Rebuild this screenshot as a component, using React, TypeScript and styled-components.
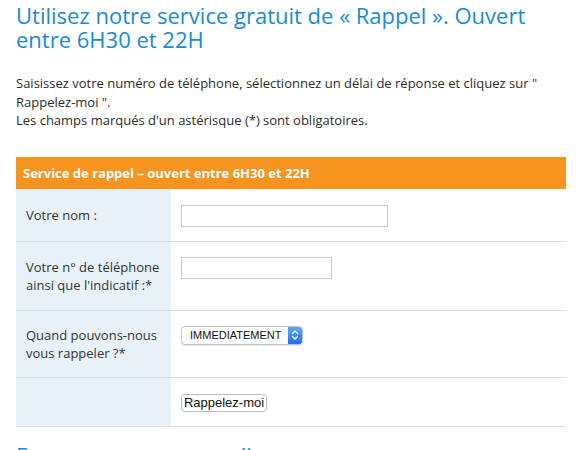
import React from "react";
import styled, { createGlobalStyle } from "styled-components";

const Global = createGlobalStyle`
  html, body { margin: 0; padding: 0; background: #ffffff; }
  body { font-family: "Open Sans", "Liberation Sans", sans-serif; color: #333333; }
`;

const Page = styled.div`
  width: 550px;
  padding: 3px 17px 0 16px;
`;

const Title = styled.h1`
  margin: 0;
  font-family: "Open Sans", sans-serif;
  font-weight: 400;
  font-size: 22px;
  line-height: 24px;
  color: #1a8ad5;
`;

const Intro = styled.p`
  margin: 23px 0 0;
  font-size: 13px;
  line-height: 18.5px;
  color: #2b2b2b;
`;

const Panel = styled.section`
  margin-top: 27px;
  display: flex;
  flex-direction: column;
`;

const PanelHeader = styled.div`
  height: 32px;
  display: flex;
  align-items: center;
  padding: 0 7px;
  background: #f7931f;
  color: #ffffff;
  font-weight: 700;
  font-size: 13px;
`;

const Row = styled.div<{ $h: number }>`
  display: grid;
  grid-template-columns: 155px 1fr;
  min-height: ${(p) => p.$h}px;
  border-bottom: 1px solid #dadcdd;
`;

const LabelCell = styled.div`
  display: flex;
  align-items: center;
  padding: 0 10px;
  background: #e9f1f8;
  font-size: 13px;
  line-height: 18px;
  color: #333333;
`;

const ValueCell = styled.div<{ $top: number }>`
  padding: ${(p) => p.$top}px 10px 0;
`;

const TextInput = styled.input<{ $w: number }>`
  display: block;
  box-sizing: border-box;
  width: ${(p) => p.$w}px;
  height: 22px;
  margin: 0;
  border: 1px solid #c9c9c9;
  background: #ffffff;
  outline: none;
`;

const SelectBox = styled.div`
  display: flex;
  align-items: stretch;
  box-sizing: border-box;
  width: 122px;
  height: 19px;
  border: 1px solid #c2c2c2;
  border-radius: 4px;
  overflow: hidden;
  background: #ffffff;
  box-shadow: 0 1px 1px rgba(0, 0, 0, 0.08);
`;

const NativeSelect = styled.select`
  flex: 1;
  min-width: 0;
  appearance: none;
  -webkit-appearance: none;
  border: none;
  background: transparent;
  margin: 0;
  padding: 0 0 0 8px;
  font-family: "Liberation Sans", Arial, sans-serif;
  font-size: 11px;
  color: #111111;
  outline: none;
`;

const Stepper = styled.span`
  width: 14px;
  display: flex;
  align-items: center;
  justify-content: center;
  background: linear-gradient(#5aa8fa, #1f71ef);
`;

const Button = styled.button`
  display: block;
  box-sizing: border-box;
  width: 86px;
  height: 18px;
  margin: 0;
  padding: 0;
  border: 1px solid #bdbdbd;
  border-radius: 4px;
  background: #ffffff;
  font-family: "Liberation Sans", Arial, sans-serif;
  font-size: 13px;
  line-height: 16px;
  white-space: nowrap;
  color: #111111;
`;

const NextTitle = styled.h2`
  margin: 16px 0 0;
  font-weight: 400;
  font-size: 22px;
  line-height: 24px;
  color: #1a8ad5;
`;

export default function App() {
  return (
    <>
      <Global />
      <Page>
        <Title>
          Utilisez notre service gratuit de « Rappel ». Ouvert entre 6H30 et 22H
        </Title>
        <Intro>
          Saisissez votre numéro de téléphone, sélectionnez un délai de réponse et cliquez sur "
          Rappelez-moi ".
          <br />
          Les champs marqués d'un astérisque (*) sont obligatoires.
        </Intro>
        <Panel>
          <PanelHeader>Service de rappel – ouvert entre 6H30 et 22H</PanelHeader>
          <Row $h={52}>
            <LabelCell>Votre nom :</LabelCell>
            <ValueCell $top={16}>
              <TextInput $w={207} type="text" />
            </ValueCell>
          </Row>
          <Row $h={68}>
            <LabelCell>Votre n° de téléphone ainsi que l'indicatif :*</LabelCell>
            <ValueCell $top={15}>
              <TextInput $w={151} type="text" />
            </ValueCell>
          </Row>
          <Row $h={66}>
            <LabelCell>Quand pouvons-nous vous rappeler ?*</LabelCell>
            <ValueCell $top={15}>
              <SelectBox>
                <NativeSelect defaultValue="imm">
                  <option value="imm">IMMEDIATEMENT</option>
                </NativeSelect>
                <Stepper>
                  <svg width="8" height="12" viewBox="0 0 8 12" fill="none">
                    <path d="M1.5 4.5 L4 2 L6.5 4.5" stroke="#ffffff" strokeWidth="1.3" strokeLinecap="round" strokeLinejoin="round" />
                    <path d="M1.5 7.5 L4 10 L6.5 7.5" stroke="#ffffff" strokeWidth="1.3" strokeLinecap="round" strokeLinejoin="round" />
                  </svg>
                </Stepper>
              </SelectBox>
            </ValueCell>
          </Row>
          <Row $h={48}>
            <LabelCell />
            <ValueCell $top={16}>
              <Button type="button">Rappelez-moi</Button>
            </ValueCell>
          </Row>
        </Panel>
        <NextTitle>Envoyez-nous un email</NextTitle>
      </Page>
    </>
  );
}
